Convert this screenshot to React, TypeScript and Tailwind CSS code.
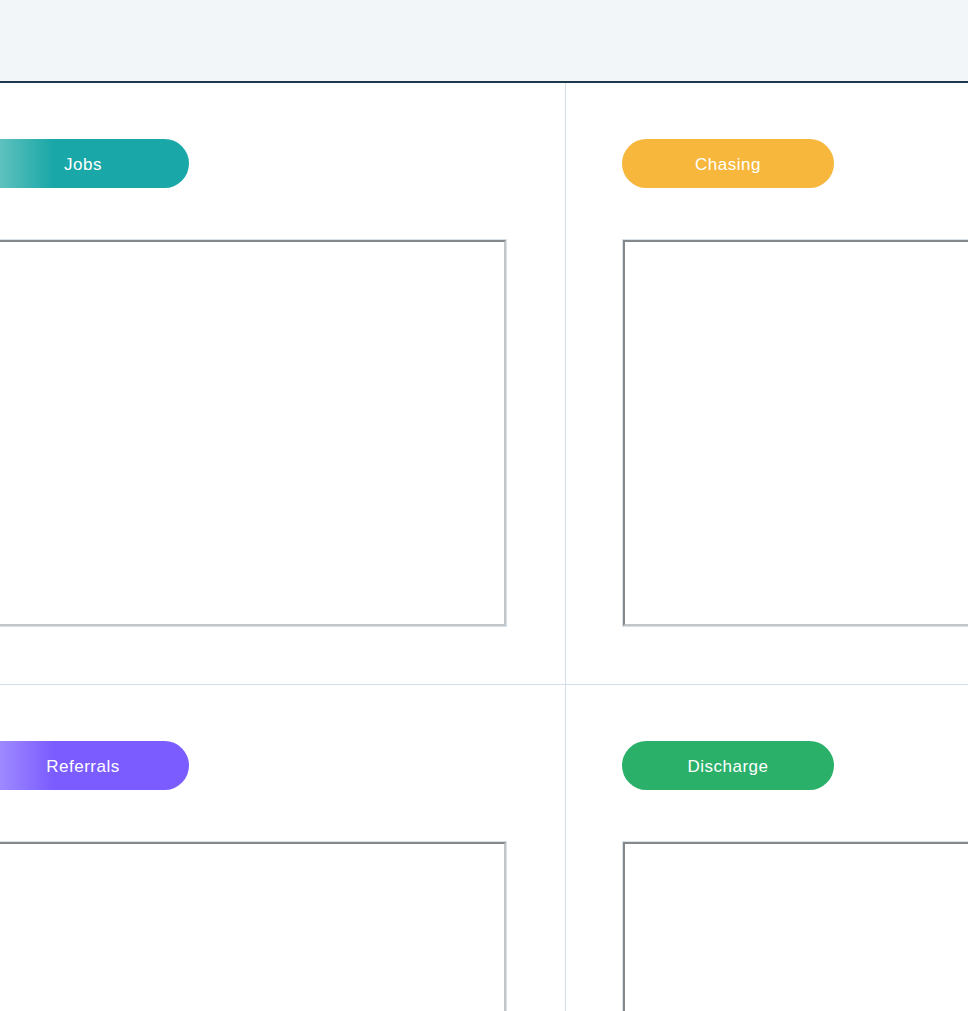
import React from "react";

function Pill({ label, cls }: { label: string; cls: string }) {
  return (
    <div
      className={`flex h-[49px] w-[212px] items-center justify-center rounded-full pt-[3px] text-[17px] tracking-[0.5px] text-white ${cls}`}
    >
      {label}
    </div>
  );
}

function Box() {
  return (
    <div className="mt-[51px] h-[388px] w-[530px] border border-[#d6e1ea]">
      <div className="h-full w-full border-2 border-t-[#86898c] border-l-[#86898c] border-b-[#c3c6c9] border-r-[#c3c6c9] bg-white" />
    </div>
  );
}

function Cell({ label, cls, right, bottom }: { label: string; cls: string; right?: boolean; bottom?: boolean }) {
  return (
    <div
      className={`flex h-[602px] flex-col pl-[56px] pt-[56px] ${right ? "" : "border-r border-[#d3dee8]"} ${bottom ? "" : "border-b border-[#d3dee8]"}`}
    >
      <Pill label={label} cls={cls} />
      <Box />
    </div>
  );
}

export default function App() {
  return (
    <div
      className="h-[1011px] w-[968px] overflow-hidden bg-white"
      style={{ fontFamily: '"Liberation Sans", Arial, sans-serif' }}
    >
      <div className="h-[83px] border-b-2 border-[#1c3a4c] bg-[#f3f6f9]" />
      <div className="ml-[-79px] grid w-[1290px] grid-cols-2">
        <Cell label="Jobs" cls="bg-[linear-gradient(90deg,#7ccdc8_0%,#19a7a7_36%)]" />
        <Cell label="Chasing" cls="bg-[#f6b73c]" right />
        <Cell label="Referrals" cls="bg-[linear-gradient(90deg,#ae9dff_0%,#7b5cff_36%)]" bottom />
        <Cell label="Discharge" cls="bg-[#2bb06a]" right bottom />
      </div>
    </div>
  );
}
